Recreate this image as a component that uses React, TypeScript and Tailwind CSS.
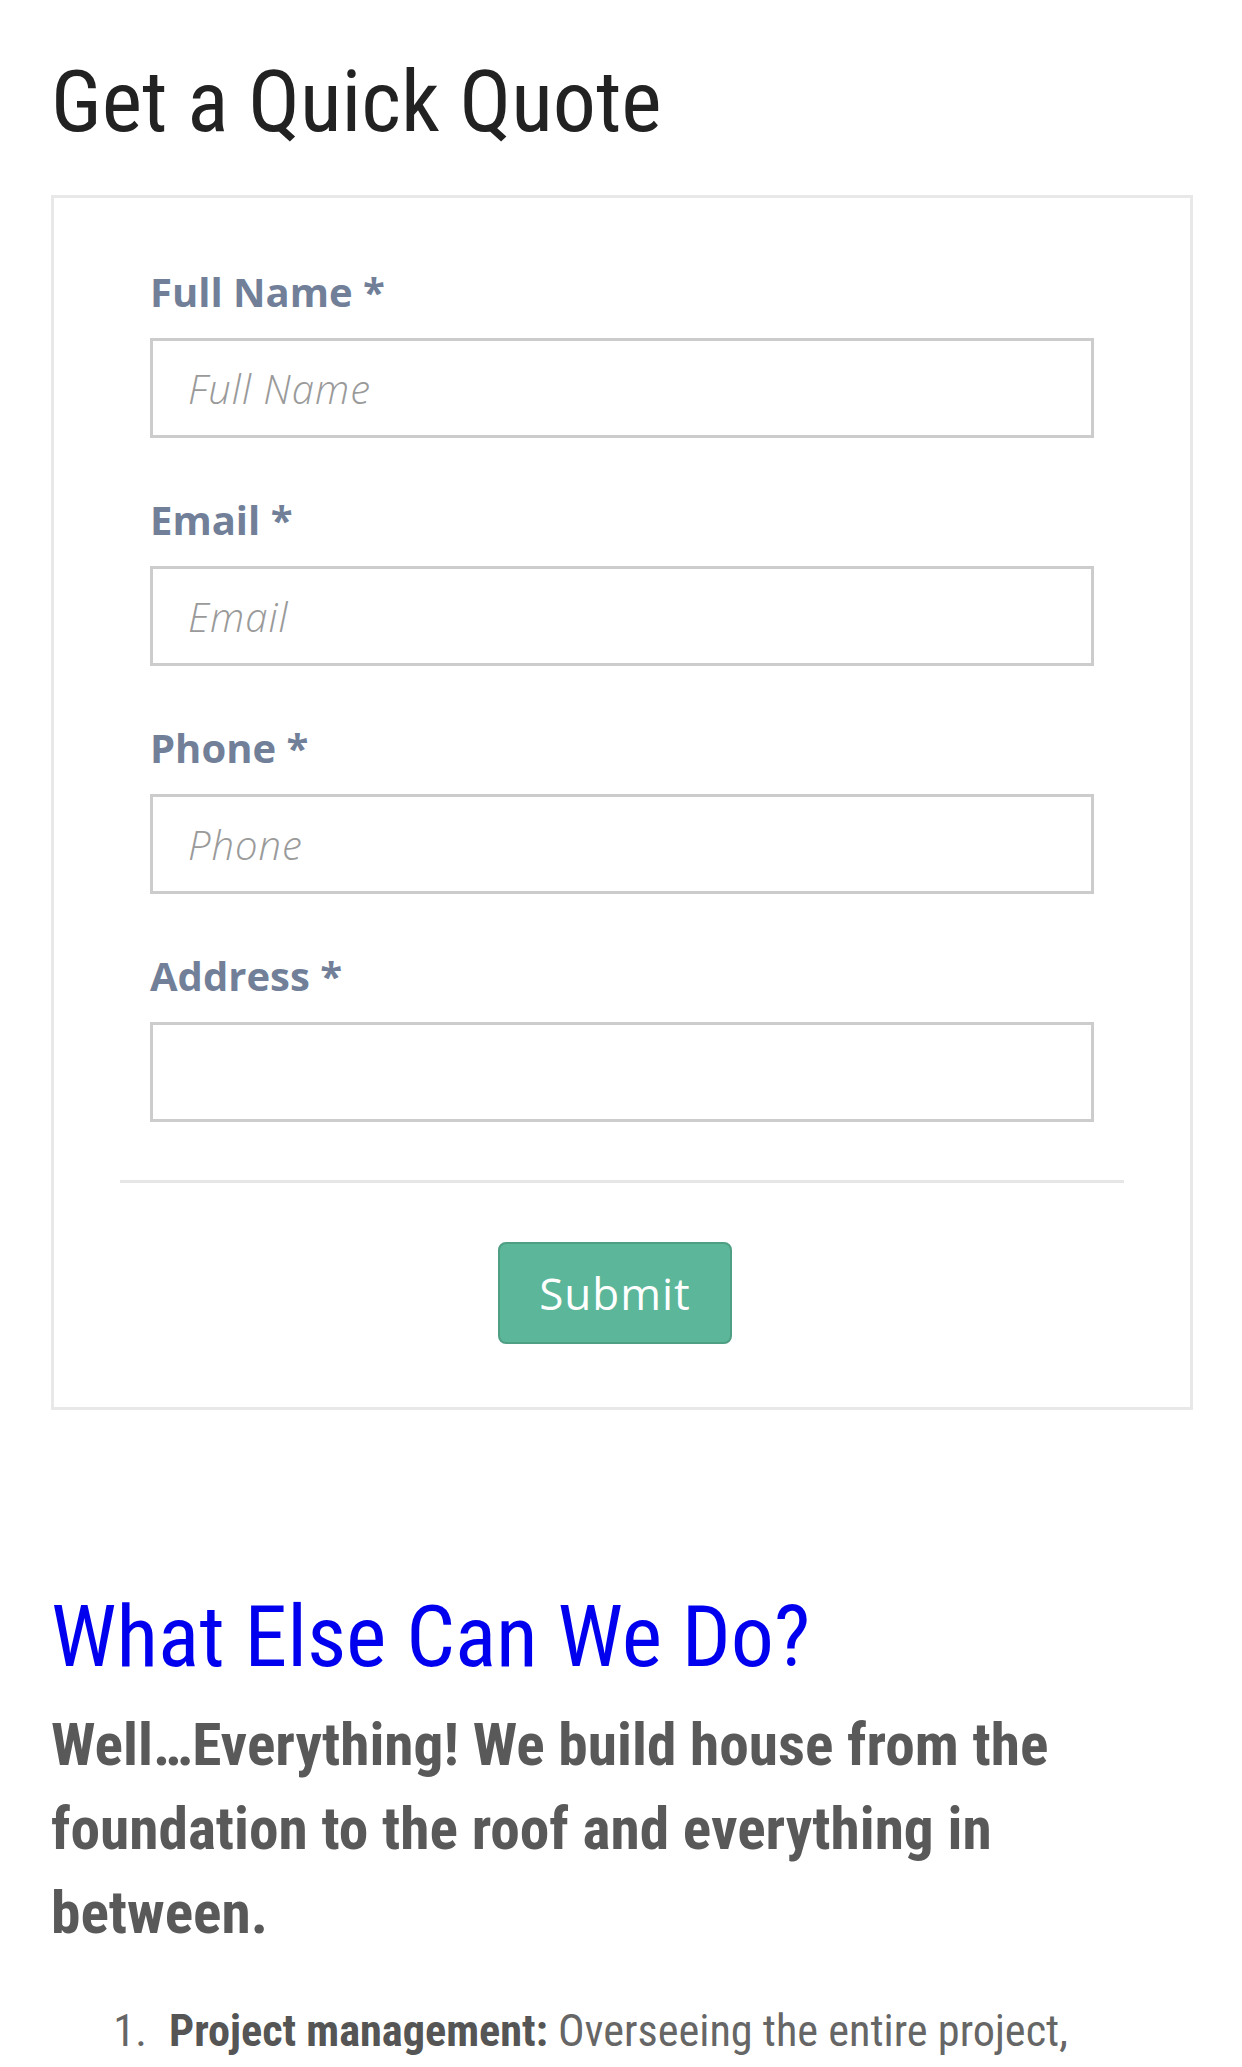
const condensed = { fontFamily: "'Roboto Condensed', Roboto, 'Liberation Sans', sans-serif" };
const formFont = { fontFamily: "'Open Sans', 'Liberation Sans', sans-serif" };

const fields = [
  { label: "Full Name", placeholder: "Full Name" },
  { label: "Email", placeholder: "Email" },
  { label: "Phone", placeholder: "Phone" },
  { label: "Address", placeholder: "" },
];

function Field({ label, placeholder }: { label: string; placeholder: string }) {
  return (
    <div className="px-[30px] mb-[58px]">
      <label className="block text-[40px] leading-[48px] font-bold text-[#718098] mb-[22px]">
        {label} *
      </label>
      <input
        type="text"
        placeholder={placeholder}
        className="block w-full h-[100px] border-[3px] border-[#cccccc] bg-white pl-[35px] text-[40px] tracking-[1px] text-[#333] outline-none placeholder:text-[#9a9a9a] placeholder:italic placeholder:font-light"
      />
    </div>
  );
}

export default function App() {
  return (
    <div className="min-h-screen bg-white pl-[51px] pr-[49px] pt-[49px] pb-10 overflow-hidden">
      <h1
        style={condensed}
        className="font-stretch-condensed text-[86px] leading-[106px] font-normal text-[#222]"
      >
        Get a Quick Quote
      </h1>

      <div
        style={formFont}
        className="mt-[40px] border-[3px] border-[#e8e8e8] pt-[70px] pb-[63px] px-[66px]"
      >
        {fields.map((f) => (
          <Field key={f.label} label={f.label} placeholder={f.placeholder} />
        ))}

        <div className="mt-[8px] border-t-[3px] border-[#e6e6e6]" />

        <div className="flex justify-center pt-[59px] pr-[14px]">
          <button className="w-[234px] h-[102px] rounded-[8px] bg-[#5bb69a] border-2 border-[#4f9f85] text-white text-[44px] tracking-[1px] font-normal">
            Submit
          </button>
        </div>
      </div>

      <h2
        style={condensed}
        className="font-stretch-condensed mt-[174px] text-[86px] leading-[106px] font-normal text-[#0000ee]"
      >
        What Else Can We Do?
      </h2>

      <p
        style={condensed}
        className="font-stretch-condensed mt-[13px] text-[59.4px] leading-[84px] font-bold text-[#595959]"
      >
        Well…Everything! We build house from the foundation to the roof and everything in between.
      </p>

      <ol
        style={condensed}
        className="font-stretch-condensed mt-[41px] list-decimal pl-[106px] text-[44.3px] leading-[71px] text-[#666]"
      >
        <li className="pl-[12px]">
          <strong className="font-bold text-[#555]">Project management:</strong> Overseeing the entire project,
          including scheduling, budgeting, and coordinating with subcontractors.
        </li>
        <li className="pl-[12px]">
          <strong className="font-bold text-[#555]">Design and planning:</strong> Working with you to create plans
          that fit your needs and budget.
        </li>
      </ol>
    </div>
  );
}
